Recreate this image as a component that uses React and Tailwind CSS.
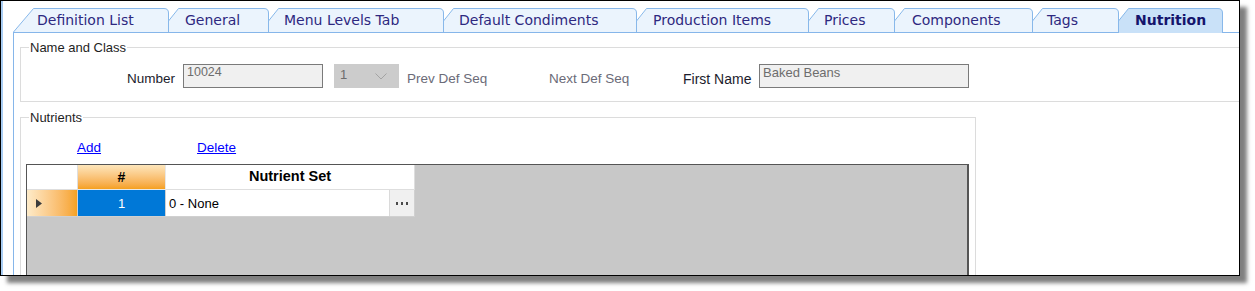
import React from 'react';

const tabs = [
  { label: 'Definition List', w: 156, cls: 'w-[156px] pl-[24px]', first: true },
  { label: 'General', w: 101, cls: 'w-[101px] pl-[17px] -ml-px' },
  { label: 'Menu Levels Tab', w: 176, cls: 'w-[176px] pl-[16px] -ml-px' },
  { label: 'Default Condiments', w: 194, cls: 'w-[194px] pl-[16px] -ml-px' },
  { label: 'Production Items', w: 173, cls: 'w-[173px] pl-[17px] -ml-px' },
  { label: 'Prices', w: 87, cls: 'w-[87px] pl-[16px] -ml-px' },
  { label: 'Components', w: 139, cls: 'w-[139px] pl-[18px] -ml-px' },
  { label: 'Tags', w: 87, cls: 'w-[87px] pl-[15px] -ml-px' },
  { label: 'Nutrition', w: 105, cls: 'w-[105px] pl-[17px] -ml-px', active: true },
];

function Tab({ label, w, cls, first, active }) {
  const H = active ? 25 : 24;
  const d = first
    ? `M0.5 ${H} L20.5 0.5 H${w - 5} Q${w - 0.5} 0.5 ${w - 0.5} 5 V${H}`
    : `M0.5 ${H} V13 L10.5 0.5 H${w - 5} Q${w - 0.5} 0.5 ${w - 0.5} 5 V${H}`;
  return (
    <div
      className={`relative flex items-center shrink-0 ${cls} ${
        active ? 'h-[25px] -mb-px z-10' : 'h-[24px]'
      }`}
    >
      <svg className="absolute left-0 top-0" width={w} height={H}>
        <path d={d} fill={active ? '#c9e1f8' : '#ebf4fd'} stroke="#88b8ea" strokeWidth="1" />
      </svg>
      <span
        className={`relative font-['DejaVu_Sans',sans-serif] text-[14px] leading-[16px] whitespace-nowrap ${
          active ? 'font-bold text-[#15146c] -mt-px' : 'text-[#2e2880]'
        }`}
      >
        {label}
      </span>
    </div>
  );
}

export default function App() {
  return (
    <div className="bg-white w-[1255px] h-[291px] font-['Liberation_Sans',Arial,sans-serif]">
      <div className="w-[1240px] h-[276px] border border-black bg-white overflow-hidden flex shadow-[7px_7px_4px_rgba(0,0,0,0.5)]">
        <div className="w-[2px] h-full bg-[#a9cdf3] shrink-0" />
        <div className="w-[10px] shrink-0" />
        <div className="flex-1 flex flex-col pt-[7px] min-w-0">
          <div className="flex items-start h-[24px]">
            {tabs.map((t) => (
              <Tab key={t.label} {...t} />
            ))}
          </div>
          <div className="flex-1 border-l border-t border-[#86b6ea] pl-[6px]">
            {/* Name and Class */}
            <fieldset className="mt-[7px] w-[1300px] min-w-0 border border-[#dcdcdc] pb-[13px]">
              <legend className="ml-[8px] px-[1px] text-[13px] leading-[15px] text-[#1e1e1e]">
                Name and Class
              </legend>
              <div className="mt-[9px] flex items-start h-[24px]">
                <div className="ml-[100px] w-[54px] text-right mt-[7px] text-[13.5px] leading-[16px] text-[#1c1c2c]">
                  Number
                </div>
                <div className="ml-[8px] w-[140px] h-[24px] border border-[#7a7a7a] bg-[#f0f0f0] pl-[3px] text-[12.5px] leading-[14px] text-[#6d6d6d]">
                  10024
                </div>
                <div className="ml-[11px] w-[65px] h-[24px] bg-[#cccccc] flex items-start pl-[6px] pt-[3px]">
                  <span className="text-[13px] leading-[16px] text-[#6d6d6d] w-[35px]">1</span>
                  <svg className="mt-[6px]" width="12" height="7">
                    <polyline points="0.5,0.5 6,6 11.5,0.5" fill="none" stroke="#a3a3a3" strokeWidth="1" />
                  </svg>
                </div>
                <div className="ml-[8px] w-[142px] mt-[7px] text-[13.5px] leading-[16px] text-[#6b6b78]">
                  Prev Def Seq
                </div>
                <div className="w-[134px] mt-[7px] text-[13.5px] leading-[16px] text-[#6b6b78]">
                  Next Def Seq
                </div>
                <div className="w-[76px] mt-[7px] text-[14px] leading-[16px] text-[#1c1c2c]">
                  First Name
                </div>
                <div className="w-[210px] h-[24px] border border-[#7a7a7a] bg-[#f0f0f0] pl-[3px] text-[13px] leading-[15px] text-[#6d6d6d]">
                  Baked Beans
                </div>
              </div>
            </fieldset>

            {/* Nutrients */}
            <fieldset className="mt-[8px] w-[956px] h-[220px] min-w-0 border border-[#dcdcdc]">
              <legend className="ml-[8px] px-[1px] text-[13px] leading-[15px] text-[#1e1e1e]">
                Nutrients
              </legend>
              <div className="mt-[15px] flex h-[16px] text-[13.5px] leading-[16px]">
                <a className="ml-[56px] text-[#0000ff] underline cursor-pointer">Add</a>
                <a className="ml-[96px] text-[#0000ff] underline cursor-pointer">Delete</a>
              </div>
              <div className="mt-[8px] ml-[5px] w-[943px] h-[140px] border border-[#555555] border-r-2 bg-[#c8c8c8]">
                {/* header row */}
                <div className="flex h-[25px]">
                  <div className="w-[51px] h-full bg-white border-r border-b border-[#dedede]" />
                  <div className="w-[88px] h-full bg-gradient-to-b from-[#fde6bb] to-[#f5a01a] border-r border-b border-[#e8e8e8] flex items-center justify-center text-[14px] font-bold text-black">
                    #
                  </div>
                  <div className="w-[249px] h-full bg-white border-r border-b border-[#dedede] flex items-center justify-center text-[14.5px] font-bold text-black">
                    Nutrient Set
                  </div>
                </div>
                {/* data row */}
                <div className="flex h-[27px]">
                  <div className="w-[51px] h-full bg-gradient-to-r from-[#fdebc9] to-[#f6a21e] border-r border-b border-[#d0d0d0] flex items-center pl-[9px] pt-[1px]">
                    <svg width="6" height="9">
                      <polygon points="0,0 6,4.5 0,9" fill="#3c3c3c" />
                    </svg>
                  </div>
                  <div className="w-[88px] h-full bg-[#0078d7] border-r border-b border-[#d0d0d0] flex items-center justify-center pt-[2px] text-[13px] text-white">
                    1
                  </div>
                  <div className="w-[249px] h-full bg-white border-r border-b border-[#d0d0d0] flex items-stretch">
                    <div className="flex-1 flex items-center pl-[3px] pt-[2px] text-[13px] text-black">0 - None</div>
                    <div className="w-[25px] bg-[#f0f0f0] border-l border-[#dadada] flex items-center justify-center pt-[1px]">
                      <svg width="12" height="3">
                        <rect x="0" y="0" width="2" height="3" fill="#4a4a4a" />
                        <rect x="5" y="0" width="2" height="3" fill="#4a4a4a" />
                        <rect x="10" y="0" width="2" height="3" fill="#4a4a4a" />
                      </svg>
                    </div>
                  </div>
                </div>
              </div>
            </fieldset>
          </div>
        </div>
      </div>
    </div>
  );
}
